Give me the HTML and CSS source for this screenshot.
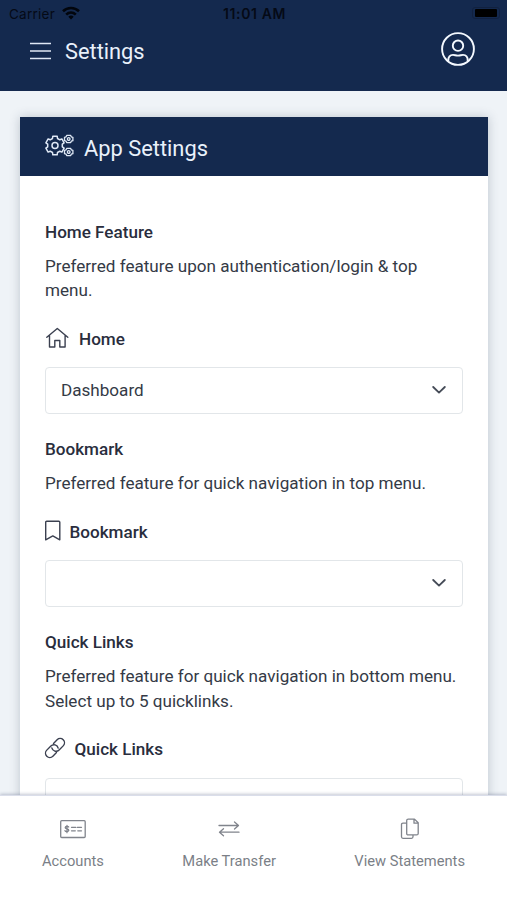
FILE: index.html
```html
<!DOCTYPE html>
<html lang="en">
<head>
<meta charset="utf-8">
<title>Settings</title>
<link rel="stylesheet" href="styles.css">
</head>
<body>
<div class="screen">
  <header class="top">
    <div class="status">
      <div class="carrier"><span>Carrier</span>
        <svg width="18" height="14" viewBox="0 0 18 14"><g fill="none" stroke="#02050c" stroke-width="2.6"><path d="M1 5.2C5.500 .9 12.500 .9 17 5.200"/><path d="M4.200 8.600C7 5.900 11 5.900 13.800 8.600"/></g><path d="M6.300 10.700Q9 8.500 11.700 10.700L9 13.400Z" fill="#02050c"/></svg>
      </div>
      <span class="time">11:01 AM</span>
      <div class="battery"><i></i></div>
    </div>
    <div class="bar">
      <svg class="burger" width="21" height="18" viewBox="0 0 21 18"><path d="M0 1.500H21M0 9H21M0 16.500H21" stroke="#dfe8f5" stroke-width="1.700"/></svg>
      <h1>Settings</h1>
      <svg class="user" width="36" height="36" viewBox="0 0 36 36" fill="none" stroke="#f4f9ff" stroke-width="1.900"><circle cx="18" cy="18" r="15.900"/><circle cx="18" cy="14.700" r="5.200"/><path d="M8.300 30.200V29.500C8.300 26 10.200 23.900 13 23.900C15 23.900 15.500 24.600 18 24.600S21 23.900 23 23.900C25.800 23.900 27.700 26 27.700 29.500V30.200"/></svg>
    </div>
  </header>
  <main>
    <section class="card">
      <div class="card-head">
        <svg width="30" height="26" viewBox="0 0 30 26" fill="none" stroke="#dfe8f5" stroke-linejoin="round">
          <defs>
            <path id="gear" d="M-2.500-7L-2.200-9.300H2.200L2.500-7L4.800-5.700L6.900-6.600L9.100-2.700L7.300-1.300V1.300L9.100 2.700L6.900 6.600L4.800 5.700L2.500 7L2.200 9.300H-2.200L-2.500 7L-4.800 5.700L-6.900 6.600L-9.100 2.700L-7.300 1.300V-1.300L-9.100-2.700L-6.900-6.600L-4.800-5.700Z"/>
            <g id="cog"><path d="M-2-3.600H2L2.600-2.200L4.200-1.700V1.700L2.600 2.200L2 3.600H-2L-2.600 2.200L-4.200 1.700V-1.700L-2.600-2.200Z"/><circle r="1.300"/></g>
          </defs>
          <use href="#gear" transform="translate(10 12.500)" stroke-width="1.500"/><circle cx="10" cy="12.500" r="3" stroke-width="1.500"/>
          <use href="#cog" transform="translate(23.700 6)" stroke-width="1.300"/>
          <use href="#cog" transform="translate(23.700 19)" stroke-width="1.300"/>
        </svg>
        <h2>App Settings</h2>
      </div>
      <div class="card-body">
        <div class="group">
          <h3>Home Feature</h3>
          <p>Preferred feature upon authentication/login &amp; top menu.</p>
          <div class="label home"><svg width="24" height="24" viewBox="0 0 24 24"><path d="M1.800 11.300L12.300 2.500L22.800 11.300M4.500 9.500V21H9.800V14.500H14.800V21H20.100V9.500"/></svg><span>Home</span></div>
          <div class="select"><span>Dashboard</span><svg class="chev" width="14" height="8" viewBox="0 0 14 8"><path d="M1.200 1L7 6.600L12.800 1"/></svg></div>
        </div>
        <div class="group">
          <h3>Bookmark</h3>
          <p>Preferred feature for quick navigation in top menu.</p>
          <div class="label mark"><svg width="16" height="24" viewBox="0 0 16 24"><path d="M.7 3.200Q.7 2.200 1.700 2.200H13.800Q14.800 2.200 14.800 3.200V20.800L7.800 16.900L.7 20.800Z"/></svg><span>Bookmark</span></div>
          <div class="select"><span></span><svg class="chev" width="14" height="8" viewBox="0 0 14 8"><path d="M1.200 1L7 6.600L12.800 1"/></svg></div>
        </div>
        <div class="group">
          <h3>Quick Links</h3>
          <p>Preferred feature for quick navigation in bottom menu. Select up to 5 quicklinks.</p>
          <div class="label links"><svg width="20" height="24" viewBox="0 0 20 24"><g transform="translate(10 12) rotate(-45)"><path d="M-2.200 4.300H-7.300A4.300 4.300 0 0 1-7.300-4.300H-1.500A4.300 4.300 0 0 1 2.200 2.300"/><path d="M2.200-4.300H7.300A4.300 4.300 0 0 1 7.300 4.300H1.500A4.300 4.300 0 0 1-2.200-2.300"/></g></svg><span>Quick Links</span></div>
          <div class="select"><span></span></div>
        </div>
      </div>
    </section>
  </main>
  <nav>
    <a class="tab accounts"><svg width="26" height="22" viewBox="0 0 26 22"><rect x=".7" y="2.700" width="24.500" height="16.800" rx="1"/><path d="M8.700 9C8.300 8.200 5.200 8.200 5.200 9.700S8.800 10.700 8.800 12.300S5.500 13.800 5 12.700M7 7.300V14.700M11.500 9.300H15.800M17.300 9.300H21.500M11.500 12.800H15.300M17.800 12.800H21.500"/></svg><span>Accounts</span></a>
    <a class="tab transfer"><svg width="22" height="22" viewBox="0 0 22 22"><path d="M1 7.500H20.200M16.500 4L20.500 7.500L16.500 11M21 14.200H1.800M5.500 10.700L1.500 14.200L5.500 17.700"/></svg><span>Make Transfer</span></a>
    <a class="tab statements"><svg width="20" height="22" viewBox="0 0 20 22"><path d="M6.700 2.600Q6.700 1.100 8.200 1.100H14.500L18.200 4.800V15.400Q18.200 16.900 16.700 16.900H8.200Q6.700 16.900 6.700 15.400ZM14 1.500V5.200H18M6.700 5.100H3Q1.500 5.100 1.500 6.600V18.800Q1.500 20.300 3 20.300H11.500Q13 20.300 13 18.800V17"/></svg><span>View Statements</span></a>
  </nav>
</div>
</body>
</html>
```
FILE: styles.css
```css
* { box-sizing: border-box; margin: 0; padding: 0; }
body { font-family: Roboto, "Liberation Sans", sans-serif; color: #343a46; }
svg { display: block; flex: none; }
.screen { height: 900px; display: flex; flex-direction: column; overflow: hidden; background: #eff3f7; }
.top { height: 91px; flex: none; background: #14294e; }
.status { height: 28px; display: grid; grid-template-columns: 1fr auto 1fr; align-items: center; padding: 0 7px 0 9px; font: 13.5px/28px Inter, sans-serif; color: #050a16; }
.carrier { display: flex; align-items: center; gap: 7px; letter-spacing: .25px; }
.carrier svg { margin-top: -2px; }
.time { font-weight: 600; font-size: 14px; letter-spacing: .6px; }
.battery { justify-self: end; width: 28px; height: 12px; border: 1px solid #11213f; border-radius: 3px; padding: 1px 2px; margin-top: -2px; }
.battery i { display: block; height: 8px; background: #000; border-radius: 1px; }
.bar { height: 46px; display: flex; align-items: center; padding: 0 31px 0 30px; }
.burger { margin-top: -1px; }
h1 { margin-left: 14px; flex: 1; font-size: 21.8px; font-weight: 400; color: #e9f1fb; }
.user { margin-top: -5px; }
main { flex: 1; min-height: 0; overflow: hidden; padding: 26px 19.5px 0 20px; }
.card { background: #fff; box-shadow: 0 0 10px rgba(40, 55, 80, .25); min-height: 800px; }
.card-head { height: 59px; background: #14294e; display: flex; align-items: center; gap: 9px; padding: 0 24.5px 0 25px; }
.card-head svg { margin-top: -2px; }
h2 { font-size: 21.85px; font-weight: 400; color: #e9f1fb; padding-top: 3px; }
.card-body { padding: 43.7px 24.5px 0 25px; }
.group { margin-bottom: 23.4px; }
h3 { font-size: 17.1px; line-height: 24.5px; font-weight: 500; color: #292d3d; }
p { font-size: 17.1px; line-height: 24.5px; margin-top: 9.5px; }
.label { height: 24.5px; margin-top: 24px; display: flex; align-items: center; font-size: 17.1px; font-weight: 500; color: #292d3d; }
.label svg { margin-top: -2px; fill: none; stroke: #3b4050; stroke-width: 1.4; stroke-linejoin: round; stroke-linecap: round; }
.home span { margin-left: 10px; }
.mark span { margin-left: 8.5px; }
.links span { margin-left: 9.5px; }
.links svg { overflow: visible; }
.select { height: 46.5px; margin-top: 16.1px; border: 1px solid #e2e6e9; border-radius: 4px; padding: 0 16px 2px 15px; display: flex; align-items: center; justify-content: space-between; font-size: 17.1px; }
.chev { fill: none; stroke: #454b57; stroke-width: 1.8; stroke-linecap: round; stroke-linejoin: round; margin-top: 1px; }
nav { position: relative; height: 105px; flex: none; border-top: 1px solid #dadeea; box-shadow: 0 -1px 3px rgba(60, 70, 110, .3); background: #fff; display: flex; justify-content: space-between; padding: 22px 42px 0; }
.tab { display: flex; flex-direction: column; align-items: center; gap: 11px; font-size: 14.7px; line-height: 20px; color: #7b7f87; }
.tab svg { fill: none; stroke: #80848c; stroke-width: 1.3; stroke-linejoin: round; stroke-linecap: round; }
```
